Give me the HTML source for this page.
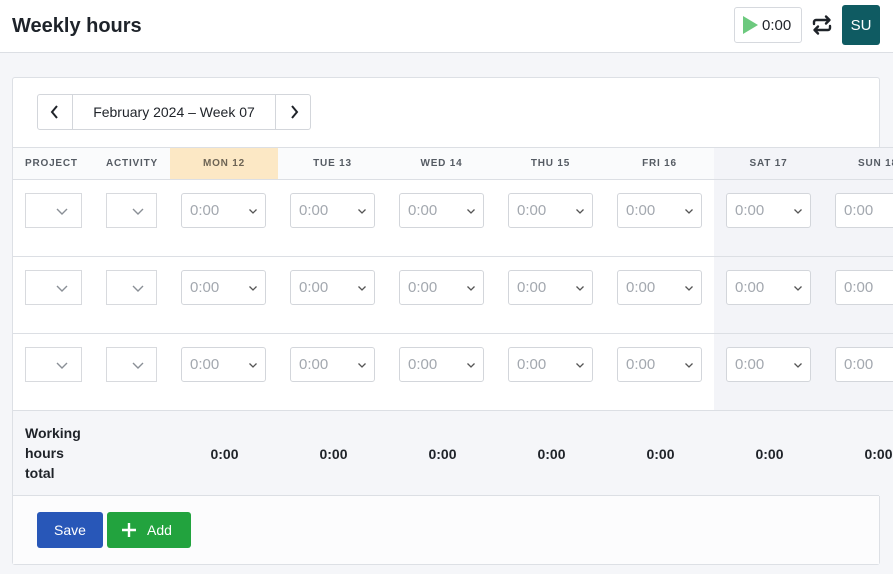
<!DOCTYPE html>
<html><head><meta charset="utf-8"><style>
*{box-sizing:border-box;margin:0;padding:0}
body{width:893px;height:574px;overflow:hidden;background:#f5f6f9;font-family:"Liberation Sans",sans-serif;color:#1f2329;position:relative}
.abs{position:absolute}
.hdr{left:0;top:0;width:893px;height:53px;background:#fff;border-bottom:1px solid #dcdfe4}
.card{left:12px;top:77px;width:868px;height:488px;background:#fff;border:1px solid #dde0e5;border-radius:3px;overflow:hidden}
.sel{position:absolute;height:35px;border:1px solid #d3d6db;border-radius:3px;background:#fff;font-size:15px;color:#a3a8af}
.sel.sq{border-radius:0;border-color:#d8dade}
.sel span{position:absolute;left:8px;top:8px}
.sel svg{position:absolute;top:14px}
.th{position:absolute;top:147px;height:33px;font-size:10px;font-weight:bold;letter-spacing:0.8px;color:#555b63;text-align:center;line-height:33px}
.line{position:absolute;left:13px;width:880px;height:1px;background:#dcdfe4}
.tot{position:absolute;top:446px;font-size:14px;font-weight:bold;text-align:center;width:109px}
</style></head><body>
<div class="abs hdr"></div>
<div class="abs" style="left:12px;top:15px;font-size:20px;font-weight:bold;color:#1e232a">Weekly hours</div>
<div class="abs" style="left:734px;top:7px;width:68px;height:36px;border:1px solid #d6d9de;border-radius:3px;background:#fff"></div>
<svg class="abs" style="left:743px;top:16px" width="16" height="18"><polygon points="0,0 15,9 0,18" fill="#6cc97e"/></svg>
<div class="abs" style="left:762px;top:17px;font-size:15px">0:00</div>
<svg class="abs" style="left:811px;top:14px" width="22" height="22" viewBox="0 0 22 22" fill="none" stroke="#1f2329" stroke-width="2.4" stroke-linecap="round" stroke-linejoin="round"><path d="M3 10V8a2 2 0 0 1 2-2h13M15 2.5l3.5 3.5L15 9.5"/><path d="M19 12v2a2 2 0 0 1-2 2H4M7 19.5L3.5 16 7 12.5"/></svg>
<div class="abs" style="left:842px;top:5px;width:38px;height:40px;background:#0f5b62;border-radius:3px;color:#fff;font-size:15px;text-align:center;line-height:41px">SU</div>

<div class="abs card"></div>
<div class="abs" style="left:714px;top:147px;width:179px;height:264px;background:#f3f4f8"></div>
<div class="abs" style="left:13px;top:147px;width:157px;height:33px;background:#fafbfc"></div>
<div class="abs" style="left:278px;top:147px;width:436px;height:33px;background:#fafbfc"></div>
<div class="abs" style="left:170px;top:147px;width:108px;height:33px;background:#fce8c5"></div>
<div class="abs" style="left:13px;top:411px;width:880px;height:85px;background:#f5f6f9"></div>
<div class="abs" style="left:13px;top:496px;width:866px;height:68px;background:#fcfcfd"></div>

<div class="line" style="top:147px"></div>
<div class="line" style="top:179px"></div>
<div class="line" style="top:256px"></div>
<div class="line" style="top:333px"></div>
<div class="line" style="top:410px"></div>
<div class="abs" style="left:13px;top:495px;width:866px;height:1px;background:#dcdfe4"></div>

<div class="abs" style="left:37px;top:94px;width:274px;height:36px;border:1px solid #d3d6db;border-radius:3px;background:#fff"></div>
<div class="abs" style="left:72px;top:95px;width:1px;height:34px;background:#d3d6db"></div>
<div class="abs" style="left:275px;top:95px;width:1px;height:34px;background:#d3d6db"></div>
<svg class="abs" style="left:50px;top:104px" width="10" height="16"><path d="M7 2L2 8l5 6" stroke="#1f2329" stroke-width="2" fill="none"/></svg>
<svg class="abs" style="left:289px;top:104px" width="10" height="16"><path d="M3 2l5 6-5 6" stroke="#1f2329" stroke-width="2" fill="none"/></svg>
<div class="abs" style="left:73px;top:104px;width:202px;text-align:center;font-size:14px">February 2024 – Week 07</div>

<div class="th" style="left:25px;text-align:left">PROJECT</div>
<div class="th" style="left:106px;text-align:left">ACTIVITY</div>
<div class="th" style="left:170px;width:108px;color:#6d6455">MON 12</div>
<div class="th" style="left:278px;width:109px">TUE 13</div>
<div class="th" style="left:387px;width:109px">WED 14</div>
<div class="th" style="left:496px;width:109px">THU 15</div>
<div class="th" style="left:605px;width:109px">FRI 16</div>
<div class="th" style="left:714px;width:109px">SAT 17</div>
<div class="th" style="left:823px;width:109px;text-align:left;padding-left:35px">SUN 18</div>

<div id="rows"></div>
<script>
var h='';var ys=[193,270,347];
var chev=function(x){return '<svg style="left:'+x+'px" width="12" height="8"><path d="M1 1l5 5 5-5" stroke="#8a8f96" stroke-width="1.4" fill="none"/></svg>'};
var chevs=function(x){return '<svg style="left:'+x+'px" width="10" height="7"><path d="M1.5 1.5l3.5 3.5 3.5-3.5" stroke="#555" stroke-width="1.3" fill="none"/></svg>'};
ys.forEach(function(y){
h+='<div class="sel sq" style="left:25px;top:'+y+'px;width:57px">'+chev(30)+'</div>';
h+='<div class="sel sq" style="left:106px;top:'+y+'px;width:51px">'+chev(25)+'</div>';
for(var i=0;i<7;i++){var x=181+i*109;
h+='<div class="sel" style="left:'+x+'px;top:'+y+'px;width:85px"><span>0:00</span>'+(i<6?chevs(66):'')+'</div>';}
});
for(var i=0;i<7;i++){h+='<div class="tot" style="left:'+(170+i*109)+'px">0:00</div>';}
document.getElementById('rows').innerHTML=h;
</script>
<div class="abs" style="left:25px;top:423px;font-size:14px;font-weight:bold;line-height:20px">Working<br>hours<br>total</div>

<div class="abs" style="left:37px;top:512px;width:66px;height:36px;background:#2857b8;border-radius:3px;color:#fff;font-size:14px;text-align:center;line-height:36px">Save</div>
<div class="abs" style="left:107px;top:512px;width:84px;height:36px;background:#22a33e;border-radius:3px;color:#fff;font-size:14px;line-height:36px">
<svg style="position:absolute;left:14px;top:10px" width="16" height="16"><path d="M8 1v14M1 8h14" stroke="#fff" stroke-width="2.4"/></svg>
<span style="position:absolute;left:40px">Add</span></div>
</body></html>
